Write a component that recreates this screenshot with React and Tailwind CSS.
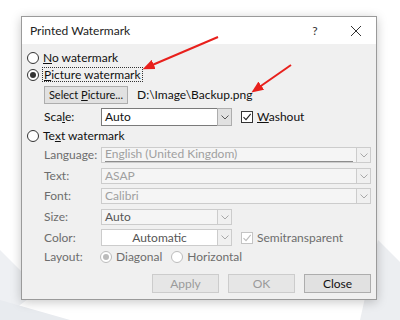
import React from 'react';

const font = { fontFamily: 'Lato, "Noto Sans", sans-serif' };

const Radio = ({ checked, disabled }) => (
  <span
    className={`w-[12px] h-[12px] rounded-full border flex items-center justify-center shrink-0 bg-white ${
      disabled ? 'border-[#bcbcbc]' : 'border-[#333333]'
    }`}
  >
    {checked && (
      <span className={`w-[6px] h-[6px] rounded-full ${disabled ? 'bg-[#bcbcbc]' : 'bg-[#333333]'}`}></span>
    )}
  </span>
);

const Check = ({ disabled }) => (
  <span
    className={`w-[12px] h-[12px] border flex items-center justify-center shrink-0 bg-white ${
      disabled ? 'border-[#c4c4c4]' : 'border-[#333333]'
    }`}
  >
    <svg width="10" height="10" viewBox="0 0 10 10">
      <path d="M1.5 5.2 L4 7.6 L8.7 1.8" fill="none" stroke={disabled ? '#bcbcbc' : '#222'} strokeWidth="1.1" />
    </svg>
  </span>
);

const Arrow = ({ disabled }) => (
  <span
    className={`w-[15px] h-full border flex items-center justify-center shrink-0 ${
      disabled ? 'border-[#cccccc] bg-[#f0f0f0]' : 'border-[#adadad] bg-[#e1e1e1]'
    }`}
  >
    <svg width="8" height="5" viewBox="0 0 8 5">
      <path d="M0.5 0.5 L4 4 L7.5 0.5" fill="none" stroke={disabled ? '#a8a8a8' : '#555'} strokeWidth="1" />
    </svg>
  </span>
);

const Combo = ({ value, width, disabled, center, textColor, white, underline }) => (
  <div className="flex h-full" style={{ width }}>
    <div
      className={`flex-1 h-full border border-r-0 flex items-center px-[3px] overflow-hidden ${
        disabled ? 'border-[#cccccc]' : 'border-[#7a7a7a]'
      } ${white ? 'bg-white' : 'bg-[#f5f5f5]'} ${center ? 'justify-center' : ''}`}
    >
      <span
        className={`leading-none whitespace-nowrap ${underline ? 'border-b border-[#8c8c8c] pb-[1px] w-full' : ''}`}
        style={{ color: textColor }}
      >
        {value}
      </span>
    </div>
    <Arrow disabled={disabled} />
  </div>
);

const Row = ({ label, children, h = 'h-[16px]', mt }) => (
  <div className={`flex items-center pl-[22px] ${h} ${mt}`}>
    <span className="w-[57px] text-[#6d6d6d] whitespace-nowrap">{label}</span>
    {children}
  </div>
);

export default function App() {
  return (
    <div className="relative w-[400px] h-[320px] bg-white overflow-hidden text-[12px]" style={font}>
      {/* faint background shapes */}
      <svg className="absolute inset-0" width="400" height="320" viewBox="0 0 400 320">
        <polygon points="0,250 40,290 0,320" fill="#eef0f3" />
        <polygon points="0,300 70,320 0,320" fill="#e8ebef" />
        <polygon points="378,240 400,262 400,320 360,320" fill="#eceef1" />
      </svg>

      <div className="relative ml-[21px] mt-[16px] w-[356px] h-[284px] border border-[#9a9a9a] bg-[#f0f0f0] shadow-[0_2px_10px_rgba(0,0,0,0.22)] flex flex-col">
        {/* title bar */}
        <div className="h-[27px] bg-white flex items-center pl-[8px] text-[#222]">
          <span className="flex-1">Printed Watermark</span>
          <span className="w-[14px] text-center mr-[28px] text-[#333]">?</span>
          <svg width="12" height="12" viewBox="0 0 12 12" className="mr-[14px]">
            <path d="M1 1 L11 11 M11 1 L1 11" stroke="#333" strokeWidth="1" />
          </svg>
        </div>

        <div className="flex flex-col pt-[6px] text-[#111]">
          <div className="flex items-center h-[16px] pl-[5px] gap-[4px]">
            <Radio />
            <span>
              <span className="underline">N</span>o watermark
            </span>
          </div>
          <div className="flex items-center h-[17px] pl-[5px] gap-[3px]">
            <Radio checked />
            <span className="border border-dotted border-[#333] px-[1px] leading-[13px]">
              <span className="underline">P</span>icture watermark
            </span>
          </div>

          <div className="flex items-center h-[18px] mt-[3px] pl-[22px]">
            <span className="w-[84px] h-[18px] border border-[#adadad] bg-[#e1e1e1] flex items-center justify-center whitespace-nowrap text-[11px]">
              Select&nbsp;<span className="underline">P</span>icture...
            </span>
            <span className="ml-[9px]">D:\Image\Backup.png</span>
          </div>

          <div className="flex items-center pl-[22px] h-[18px] mt-[4px]">
            <span className="w-[57px]">
              Sca<span className="underline">l</span>e:
            </span>
            <Combo value="Auto" width={131} white textColor="#111" />
            <span className="ml-[9px] flex items-center gap-[4px]">
              <Check />
              <span>
                <span className="underline">W</span>ashout
              </span>
            </span>
          </div>

          <div className="flex items-center h-[16px] mt-[2px] pl-[5px] gap-[4px]">
            <Radio />
            <span>
              Te<span className="underline">x</span>t watermark
            </span>
          </div>

          <Row label="Language:" mt="mt-[3px]">
            <Combo value="English (United Kingdom)" width={270} disabled textColor="#a0a0a0" underline />
          </Row>
          <Row label="Text:" mt="mt-[5px]">
            <Combo value="ASAP" width={270} disabled textColor="#a0a0a0" />
          </Row>
          <Row label="Font:" mt="mt-[4px]">
            <Combo value="Calibri" width={270} disabled textColor="#a0a0a0" />
          </Row>
          <Row label="Size:" mt="mt-[5px]">
            <Combo value="Auto" width={131} disabled textColor="#555" />
          </Row>
          <Row label="Color:" h="h-[17px]" mt="mt-[4px]">
            <Combo value="Automatic" width={131} disabled white center textColor="#555" />
            <span className="ml-[9px] flex items-center gap-[4px]">
              <Check disabled />
              <span className="text-[#6d6d6d]">Semitransparent</span>
            </span>
          </Row>
          <Row label="Layout:" mt="mt-[3px]">
            <span className="flex items-center gap-[4px] ml-[-1px] text-[#6d6d6d]">
              <Radio checked disabled />
              <span>Diagonal</span>
            </span>
            <span className="flex items-center gap-[4px] ml-[9px] text-[#6d6d6d]">
              <Radio disabled />
              <span>Horizontal</span>
            </span>
          </Row>

          <div className="flex justify-end gap-[9px] pr-[5px] mt-[9px]">
            <span className="w-[67px] h-[19px] border border-[#cccccc] bg-[#e6e6e6] flex items-center justify-center text-[#9a9a9a]">
              Apply
            </span>
            <span className="w-[67px] h-[19px] border border-[#cccccc] bg-[#e6e6e6] flex items-center justify-center text-[#9a9a9a]">
              OK
            </span>
            <span className="w-[67px] h-[19px] border border-[#adadad] bg-[#e1e1e1] flex items-center justify-center text-[#111]">
              Close
            </span>
          </div>
        </div>
      </div>

      {/* red annotation arrows */}
      <svg className="absolute inset-0 pointer-events-none" width="400" height="320" viewBox="0 0 400 320">
        <defs>
          <marker id="ah" markerWidth="6" markerHeight="5" refX="2" refY="2.5" orient="auto">
            <path d="M0,0 L6,2.5 L0,5 Z" fill="#e8201c" />
          </marker>
        </defs>
        <line x1="218" y1="37" x2="150" y2="66" stroke="#e8201c" strokeWidth="2" markerEnd="url(#ah)" />
        <line x1="291" y1="65" x2="258" y2="88" stroke="#e8201c" strokeWidth="2" markerEnd="url(#ah)" />
      </svg>
    </div>
  );
}
